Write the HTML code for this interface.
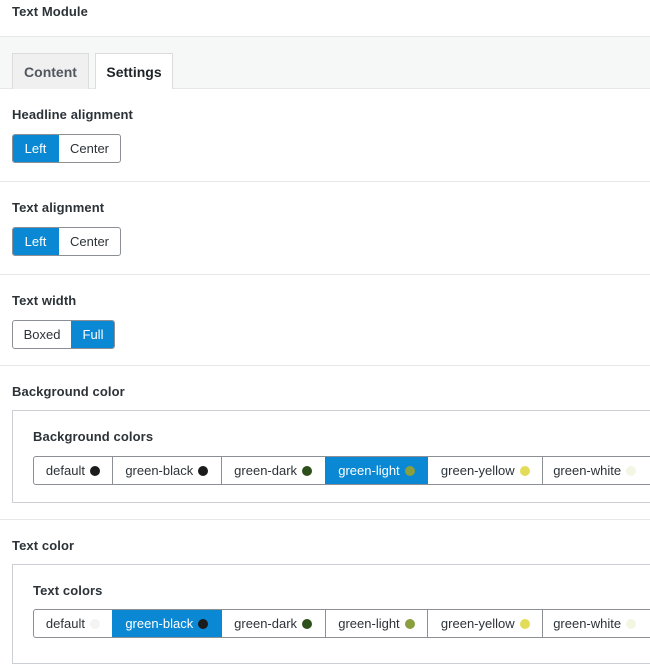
<!DOCTYPE html>
<html><head><style>
*{box-sizing:border-box;margin:0;padding:0}
body{width:650px;height:650px;overflow:hidden;background:#fff;font-family:"Liberation Sans",sans-serif;color:#1e1e1e;position:relative}
.a{position:absolute}
.t{font-size:13px;color:#2c3338;font-weight:600;letter-spacing:.1px}
.hr{position:absolute;left:0;width:650px;height:1px;background:#e6e7e8}
.grp{position:absolute;display:flex;border:1px solid #8c8f94;border-radius:3px;overflow:hidden;height:29px}
.grp div{font-size:13px;color:#2c3338;display:flex;align-items:center;justify-content:center;border-left:1px solid #8c8f94;height:100%}
.grp div:first-child{border-left:none}
.grp .on{background:#0a88d3;color:#fff;border-left-color:#0a88d3}
.grp .on+div{border-left-color:#0a88d3}
.d{display:inline-block;width:10px;height:10px;border-radius:50%;margin-left:5px}
.box{position:absolute;left:12px;width:660px;border:1px solid #ccd0d4}
</style></head><body>
<div class="a t" style="left:12px;top:4px">Text Module</div>
<div class="a" style="left:0;top:36px;width:650px;height:53px;background:#f6f7f7;border-top:1px solid #e6e7e8;border-bottom:1px solid #e6e7e8"></div>
<div class="a" style="left:12px;top:53px;width:77px;height:36px;background:#f0f0f1;border:1px solid #dcdcde;border-bottom:none;font-size:14px;font-weight:bold;color:#50575e;display:flex;align-items:center;justify-content:center">Content</div>
<div class="a" style="left:95px;top:53px;width:78px;height:36px;background:#fff;border:1px solid #dcdcde;border-bottom:none;font-size:14px;font-weight:bold;color:#1d2327;display:flex;align-items:center;justify-content:center">Settings</div>

<div class="a t" style="left:12px;top:107px">Headline alignment</div>
<div class="grp" style="left:12px;top:134px"><div class="on" style="width:45px">Left</div><div style="width:62px">Center</div></div>
<div class="hr" style="top:181px"></div>

<div class="a t" style="left:12px;top:200px">Text alignment</div>
<div class="grp" style="left:12px;top:227px"><div class="on" style="width:45px">Left</div><div style="width:62px">Center</div></div>
<div class="hr" style="top:274px"></div>

<div class="a t" style="left:12px;top:293px">Text width</div>
<div class="grp" style="left:12px;top:320px"><div style="width:58px">Boxed</div><div class="on" style="width:43px">Full</div></div>
<div class="hr" style="top:365px"></div>

<div class="a t" style="left:12px;top:384px">Background color</div>
<div class="box" style="top:410px;height:93px"></div>
<div class="a t" style="left:33px;top:429px">Background colors</div>
<div class="grp" style="left:33px;top:456px;width:640px"><div style="width:78px">default<span class="d" style="background:#1b1b1b"></span></div><div style="width:109px">green-black<span class="d" style="background:#1b1b1b"></span></div><div style="width:104px">green-dark<span class="d" style="background:#2d4f1a"></span></div><div class="on" style="width:103px">green-light<span class="d" style="background:#8a9f3e"></span></div><div style="width:115px">green-yellow<span class="d" style="background:#e3dc5a"></span></div><div style="width:130px;justify-content:flex-start;padding-left:10px">green-white<span class="d" style="background:#f3f6e3"></span></div></div>
<div class="hr" style="top:519px"></div>

<div class="a t" style="left:12px;top:538px">Text color</div>
<div class="box" style="top:564px;height:100px"></div>
<div class="a t" style="left:33px;top:583px">Text colors</div>
<div class="grp" style="left:33px;top:609px;width:640px"><div style="width:78px">default<span class="d" style="background:#f4f4f4"></span></div><div class="on" style="width:109px">green-black<span class="d" style="background:#1b1b1b"></span></div><div style="width:104px">green-dark<span class="d" style="background:#2d4f1a"></span></div><div style="width:103px">green-light<span class="d" style="background:#8a9f3e"></span></div><div style="width:115px">green-yellow<span class="d" style="background:#e3dc5a"></span></div><div style="width:130px;justify-content:flex-start;padding-left:10px">green-white<span class="d" style="background:#f3f6e3"></span></div></div>
</body></html>
